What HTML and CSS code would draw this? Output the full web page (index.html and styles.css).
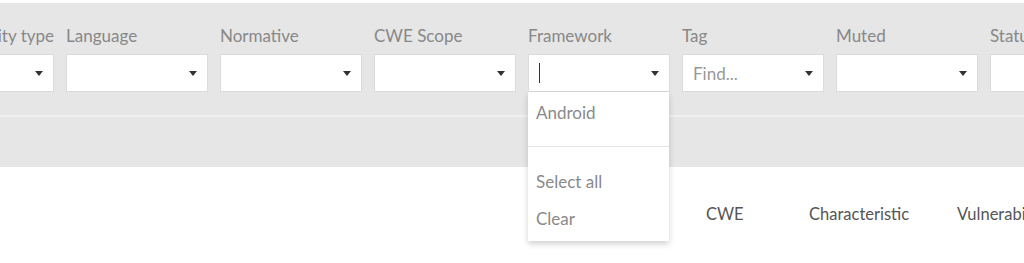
FILE: index.html
```html
<!DOCTYPE html>
<html>
<head>
    <title>Findings</title>
    <link rel="stylesheet" href="styles.css">
</head>
<body>
    <div class="filters">
        <div class="filter-row">
            <div class="filter">
                <label>Vulnerability type</label>
                <div class="select"><span class="arrow"></span></div>
            </div>
            <div class="filter">
                <label>Language</label>
                <div class="select"><span class="arrow"></span></div>
            </div>
            <div class="filter">
                <label>Normative</label>
                <div class="select"><span class="arrow"></span></div>
            </div>
            <div class="filter">
                <label>CWE Scope</label>
                <div class="select"><span class="arrow"></span></div>
            </div>
            <div class="filter">
                <label>Framework</label>
                <div class="select focused"><span class="cursor"></span><span class="arrow"></span></div>
                <div class="dropdown">
                    <div class="options">
                        <div class="option">Android</div>
                    </div>
                    <div class="actions">
                        <div class="option">Select all</div>
                        <div class="option">Clear</div>
                    </div>
                </div>
            </div>
            <div class="filter">
                <label>Tag</label>
                <div class="select"><span class="placeholder">Find...</span><span class="arrow"></span></div>
            </div>
            <div class="filter">
                <label>Muted</label>
                <div class="select"><span class="arrow"></span></div>
            </div>
            <div class="filter">
                <label>Status</label>
                <div class="select"><span class="arrow"></span></div>
            </div>
        </div>
    </div>
    <div class="toolbar"></div>
    <div class="table-head">
        <div class="col col-cwe">CWE</div>
        <div class="col col-char">Characteristic</div>
        <div class="col col-vuln">Vulnerability</div>
    </div>
</body>
</html>
```

FILE: styles.css
```css
html, body {
    height: 100%;
}

body {
    margin: 0;
    padding-top: 3px;
    box-sizing: border-box;
    font-family: 'Lato', sans-serif;
    font-size: 17px;
    background: white;
    overflow: hidden;
}

.filters {
    background-color: #e6e6e6;
    height: 112px;
    border-bottom: 2px solid #f0f0f0;
}

.filter-row {
    display: flex;
    gap: 12px;
    margin-left: -88px;
    padding-top: 20px;
}

.filter {
    position: relative;
    flex: 0 0 142px;
}

label {
    display: block;
    height: 26px;
    line-height: 26px;
    margin-bottom: 5px;
    color: #888;
    white-space: nowrap;
}

.filter:first-child label {
    text-align: right;
}

.select {
    position: relative;
    height: 36px;
    background: white;
    border: 1px solid #dadada;
    display: flex;
    align-items: center;
    padding: 0 10px;
}

.arrow {
    position: absolute;
    right: 10px;
    top: 16px;
    width: 0;
    height: 0;
    border-left: 4px solid transparent;
    border-right: 4px solid transparent;
    border-top: 5px solid #333;
}

.cursor {
    width: 1px;
    height: 20px;
    background: #333;
}

.placeholder {
    color: #999;
}

.dropdown {
    position: absolute;
    top: 69px;
    left: 0;
    width: 141px;
    background: white;
    box-shadow: 0 3px 6px rgba(0,0,0,0.18);
    z-index: 10;
}

.options {
    height: 51px;
    padding-top: 3px;
}

.option {
    height: 36px;
    line-height: 36px;
    padding: 0 8px;
    color: #8a8a8a;
}

.actions {
    border-top: 1px solid #e4e4e4;
    padding: 16px 0 4px;
}

.actions .option {
    height: 37px;
    line-height: 37px;
}

.toolbar {
    background-color: #e6e6e6;
    height: 50px;
}

.table-head {
    display: flex;
    padding-left: 706px;
    padding-top: 37px;
    color: #555;
    font-size: 16.5px;
    white-space: nowrap;
}

.col-cwe {
    flex: 0 0 103px;
}

.col-char {
    flex: 0 0 148px;
}
```
